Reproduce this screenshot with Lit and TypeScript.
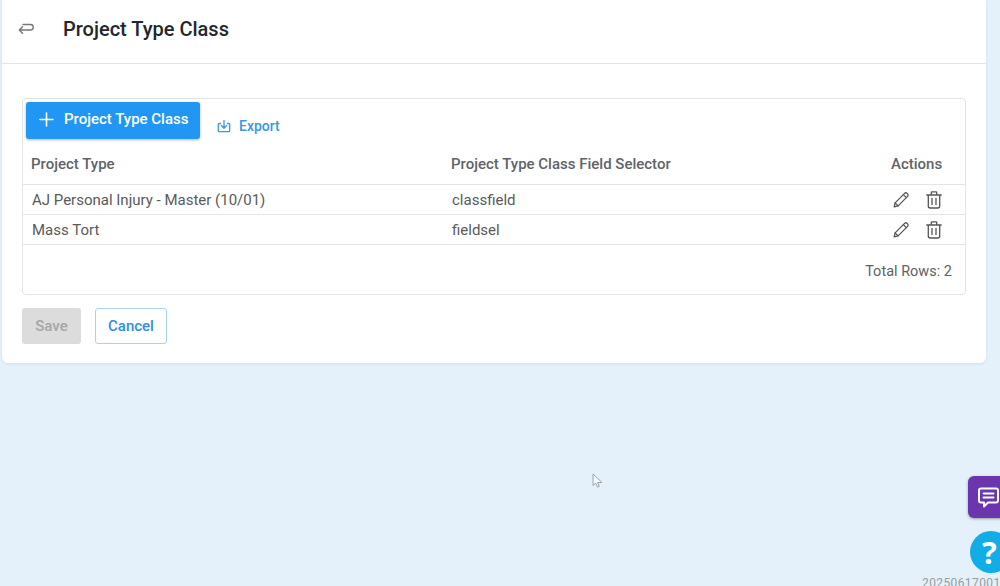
import { LitElement, html, css } from "lit";
import { customElement } from "lit/decorators.js";

const pencil = html`<svg class="ic" width="18" height="18" viewBox="0 0 18 18" fill="none" stroke="#555" stroke-width="1.3" stroke-linejoin="round" stroke-linecap="round"><path d="M2.2 15.8l.9-3.9L12.6 2.4c.7-.7 1.7-.7 2.3-.1l.8.8c.6.6.6 1.600-.1 2.300L6.100 14.900z"/><path d="M3.100 11.900l3 3M11.400 3.600l3 3"/></svg>`;
const trash = html`<svg class="ic" width="16" height="18" viewBox="0 0 16 18" fill="none" stroke="#555" stroke-width="1.300" stroke-linecap="round" stroke-linejoin="round"><path d="M.8 4h14.400M5.300 4V1.500c0-.4.300-.7.700-.7h4c.4 0 .7.300.7.700V4M2.300 4v11c0 1.200.8 2 2 2h7.400c1.200 0 2-.8 2-2V4M6 7.500v6M10 7.500v6"/></svg>`;

@customElement("app-root")
export class AppRoot extends LitElement {
  static styles = css`
    :host { display: block; position: relative; width: 1000px; height: 586px; overflow: hidden; background: #e4f1fb; font-family: Roboto, "Liberation Sans", sans-serif; color: #555; }
    .card { margin-left: 2px; width: 984px; height: 363px; box-sizing: border-box; background: #fff; border-radius: 0 0 6px 6px; box-shadow: 0 1px 3px rgba(120,150,180,.18); display: flex; flex-direction: column; }
    .head { height: 64px; box-sizing: border-box; border-bottom: 1px solid #e2e4e6; display: flex; align-items: center; padding: 0 0 6px 16px; }
    .head svg { display: block; }
    .title { margin-left: 29px; font-size: 20px; font-weight: 500; color: #23272b; }
    .body { padding: 34px 20px 0; display: flex; flex-direction: column; gap: 13px; }
    .box { height: 197px; width: 944px; box-sizing: border-box; border: 1px solid #e2e4e6; border-radius: 4px; display: flex; flex-direction: column; }
    .tools { display: flex; align-items: flex-start; padding: 3px 0 0 3px; height: 40px; box-sizing: border-box; }
    .add { width: 174px; height: 37px; box-sizing: border-box; border: 0; border-radius: 3px; background: #2196f3; color: #fff; font: 500 15px Roboto, sans-serif; display: flex; align-items: center; gap: 10px; padding: 0 0 3px 13px; box-shadow: 0 1px 3px rgba(0,0,0,.3); white-space: nowrap; }
    .export { display: flex; align-items: center; gap: 8px; margin: 16px 0 0 17px; color: #3a97e0; font-size: 14px; font-weight: 500; }
    .row { display: grid; grid-template-columns: 420px 1fr 82px; align-items: center; box-sizing: border-box; }
    .th { height: 46px; font-size: 15px; font-weight: 500; color: #5f6368; padding: 4px 0 0 8px; border-bottom: 1px solid #e2e4e6; }
    .th span:last-child { padding-left: 8px; }
    .td { height: 30px; font-size: 15px; color: #5a5a5a; padding-left: 9px; border-bottom: 1px solid #e2e4e6; }
    .acts { display: flex; align-items: center; gap: 16px; padding-left: 9px; }
    .ic { display: block; }
    .total { flex: 1; display: flex; justify-content: flex-end; align-items: center; font-size: 14.500px; color: #5f5f5f; padding: 3px 13px 0 0; }
    .btns { display: flex; gap: 14px; }
    .save, .cancel { height: 36px; box-sizing: border-box; border-radius: 3px; font: 500 15px Roboto, sans-serif; display: flex; align-items: center; justify-content: center; }
    .save { width: 59px; background: #dcdcdc; color: #a6a6a6; border: 0; }
    .cancel { width: 72px; background: #fff; color: #2f8fdf; border: 1px solid #a9d2f2; }
    .chat { position: absolute; left: 968px; top: 476px; width: 40px; height: 42px; background: #6a35ad; border-radius: 6px; box-shadow: 0 1px 3px rgba(0,0,0,.35); display: flex; align-items: center; padding-left: 9px; box-sizing: border-box; }
    .help { position: absolute; left: 970px; top: 531px; width: 42px; height: 42px; border-radius: 50%; background: #12ace6; color: #fff; font: 700 31px "Open Sans", sans-serif; display: flex; align-items: center; padding-left: 12px; box-sizing: border-box; }
    .build { position: absolute; left: 922px; top: 576px; font-size: 12px; letter-spacing: .4px; color: #9a9a9a; white-space: nowrap; }
    .cursor { position: absolute; left: 592px; top: 473px; }
  `;

  render() {
    const rows = [["AJ Personal Injury - Master (10/01)", "classfield"], ["Mass Tort", "fieldsel"]];
    return html`
      <div class="card">
        <div class="head">
          <svg width="16" height="14" viewBox="0 0 16 14" fill="none" stroke="#777" stroke-width="1.400" stroke-linecap="round" stroke-linejoin="round"><path d="M5 2.500h7.500a2.700 2.700 0 0 1 0 5.500H1.500M4.500 4.700L1.300 8l3.200 3.300"/></svg>
          <div class="title">Project Type Class</div>
        </div>
        <div class="body">
          <div class="box">
            <div class="tools">
              <div class="add">
                <svg width="15" height="15" viewBox="0 0 15 15" stroke="#fff" stroke-width="1.600" stroke-linecap="round"><path d="M7.500 1v13M1 7.500h13"/></svg>
                Project Type Class
              </div>
              <div class="export">
                <svg width="14" height="14" viewBox="0 0 14 14" fill="none" stroke="#3a97e0" stroke-width="1.300" stroke-linecap="round" stroke-linejoin="round"><path d="M7 1.500v7.500M4.300 6.500L7 9.200l2.700-2.700M3.500 4.500H2.300c-.6 0-1 .4-1 1v6c0 .7.400 1.200 1 1.200h9.400c.6 0 1-.5 1-1.200v-6c0-.6-.4-1-1-1h-1.200"/></svg>
                Export
              </div>
            </div>
            <div class="row th"><span>Project Type</span><span>Project Type Class Field Selector</span><span>Actions</span></div>
            ${rows.map((r) => html`
              <div class="row td"><span>${r[0]}</span><span>${r[1]}</span><span class="acts">${pencil}${trash}</span></div>
            `)}
            <div class="total">Total Rows: 2</div>
          </div>
          <div class="btns">
            <div class="save">Save</div>
            <div class="cancel">Cancel</div>
          </div>
        </div>
      </div>
      <svg class="cursor" width="12" height="16" viewBox="0 0 12 16"><path d="M1 1v11.500l2.800-2.400 1.700 4 1.800-.8-1.700-3.800H10z" fill="#f4f8fb" stroke="#9aa3aa" stroke-width="1"/></svg>
      <div class="chat">
        <svg width="23" height="23" viewBox="0 0 23 23" fill="none" stroke="#fff" stroke-width="2" stroke-linejoin="round" stroke-linecap="round"><path d="M4 2.500h15c1.200 0 2 .8 2 2v10c0 1.200-.8 2-2 2h-8l-4 4v-4H4c-1.200 0-2-.8-2-2v-10c0-1.200.8-2 2-2z"/><path d="M6.500 7.500h10M6.500 11.500h10"/></svg>
      </div>
      <div class="help">?</div>
      <div class="build">20250617001</div>
    `;
  }
}
